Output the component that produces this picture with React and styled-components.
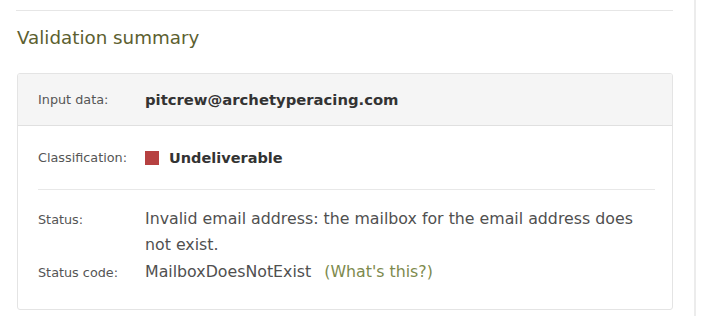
import React from "react";
import styled, { createGlobalStyle } from "styled-components";

const Global = createGlobalStyle`
  html, body { margin: 0; padding: 0; background: #fff; }
  body { font-family: "DejaVu Sans", "Noto Sans", sans-serif; }
`;

const Page = styled.div`
  width: 696px;
  min-height: 316px;
  box-sizing: border-box;
  border-right: 2px solid #ececec;
  padding: 10px 21px 0 16px;
`;

const Rule = styled.div`
  border-top: 1px solid #e6e6e6;
`;

const Heading = styled.h2`
  margin: 14px 0 0 1px;
  font-size: 18.3px;
  font-weight: 400;
  line-height: 26px;
  color: #5c6030;
`;

const Card = styled.div`
  margin: 22px 0 0 1px;
  border: 1px solid #e4e4e4;
  border-radius: 3px;
  overflow: hidden;
`;

const HeaderRow = styled.div`
  display: grid;
  grid-template-columns: 107px 1fr;
  align-items: center;
  height: 51px;
  padding: 0 20px;
  background: #f5f5f5;
  border-bottom: 1px solid #e0e0e0;
`;

const Section = styled.div`
  padding: 0 17px 0 20px;
`;

const Row = styled.div`
  display: grid;
  grid-template-columns: 107px 1fr;
  align-items: ${(p) => (p.$top ? "baseline" : "center")};
  min-height: ${(p) => p.$h || 0}px;
  margin-top: ${(p) => p.$gap || 0}px;
  border-bottom: ${(p) => (p.$divider ? "1px solid #e8e8e8" : "none")};
`;

const Label = styled.span`
  font-size: 12.8px;
  color: #555;
`;

const Email = styled.span`
  font-size: 14.8px;
  font-weight: 700;
  color: #333;
`;

const Class = styled.span`
  display: inline-flex;
  align-items: center;
  gap: 10px;
  font-size: 14.5px;
  font-weight: 700;
  color: #333;
`;

const Swatch = styled.span`
  width: 14px;
  height: 14px;
  background: #b64141;
  display: inline-block;
`;

const Details = styled.div`
  padding: 16px 0 24px;
  display: flex;
  flex-direction: column;
`;

const Value = styled.span`
  font-size: 15.8px;
  line-height: 26px;
  color: #505050;
  max-width: 500px;
`;

const Help = styled.a`
  color: #7d8a4d;
  margin-left: 13px;
  text-decoration: none;
`;

export default function App() {
  return (
    <>
      <Global />
      <Page>
        <Rule />
        <Heading>Validation summary</Heading>
        <Card>
          <HeaderRow>
            <Label>Input data:</Label>
            <Email>pitcrew@archetyperacing.com</Email>
          </HeaderRow>
          <Section>
            <Row $h={63} $divider>
              <Label>Classification:</Label>
              <Class>
                <Swatch />
                Undeliverable
              </Class>
            </Row>
            <Details>
              <Row $top>
                <Label>Status:</Label>
                <Value>
                  Invalid email address: the mailbox for the email address does
                  not exist.
                </Value>
              </Row>
              <Row $top $gap={1}>
                <Label>Status code:</Label>
                <Value>
                  MailboxDoesNotExist<Help href="#">(What's this?)</Help>
                </Value>
              </Row>
            </Details>
          </Section>
        </Card>
      </Page>
    </>
  );
}
